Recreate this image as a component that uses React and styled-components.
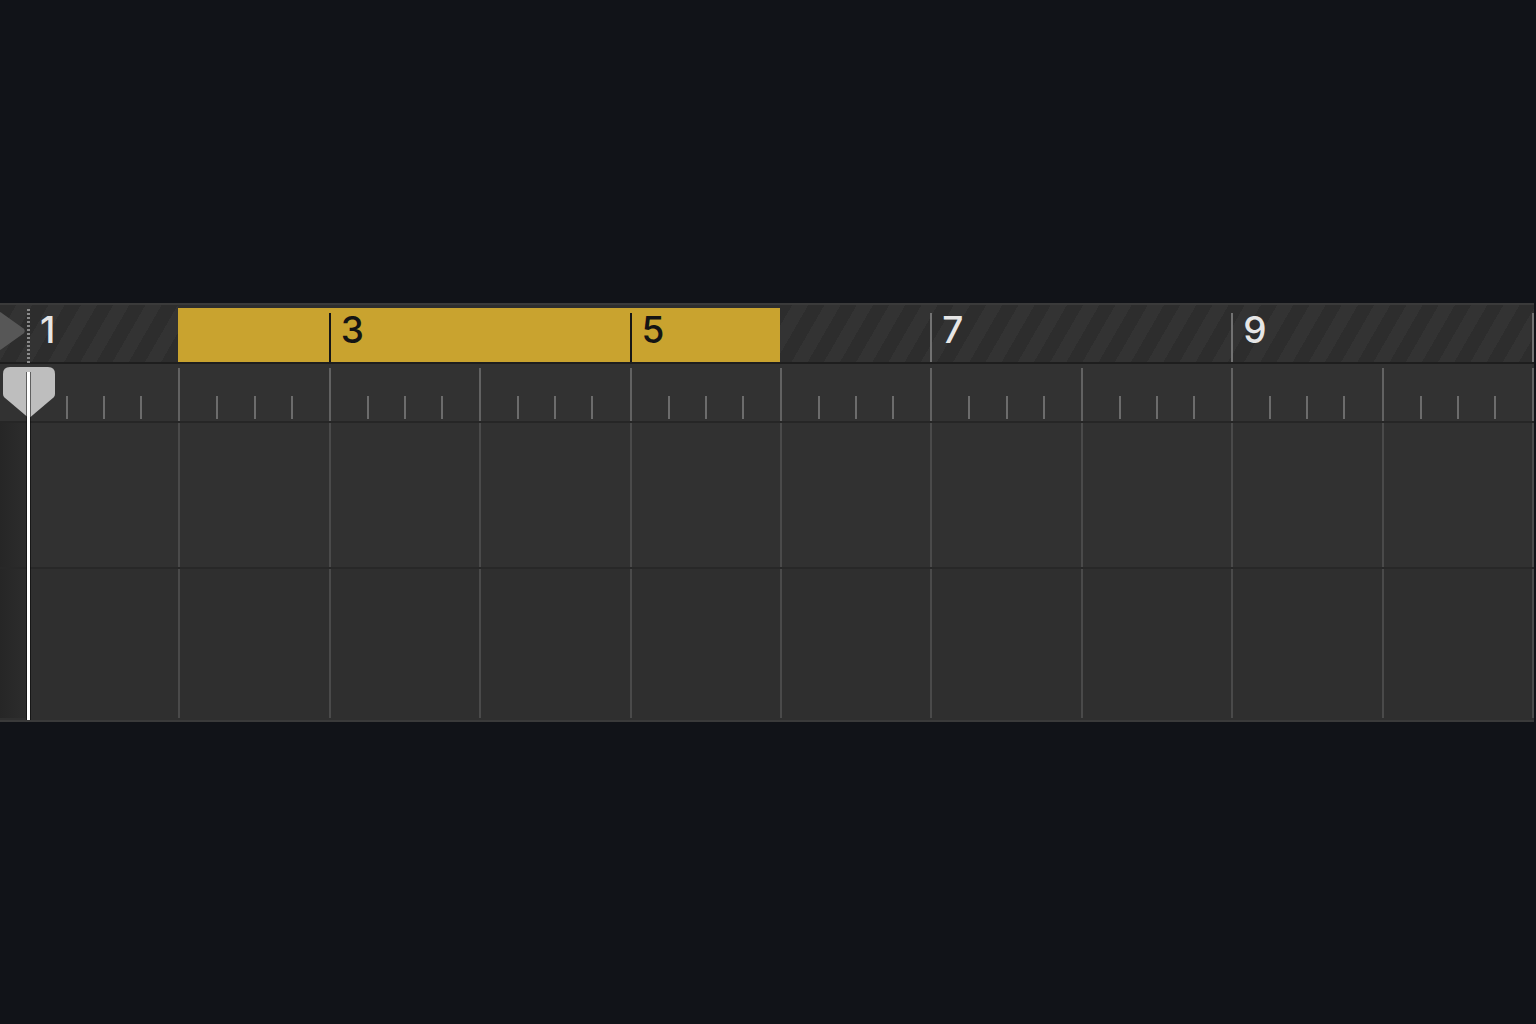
import React from "react";
import styled, { createGlobalStyle, css } from "styled-components";

const BAR_WIDTH = 150.4;
const LEAD = 28;
const BARS = Array.from({ length: 11 }, (_, i) => i + 1);
const CYCLE = { from: 2, to: 5 };
const LABELS = { 1: "1", 3: "3", 5: "5", 7: "7", 9: "9" };

const Global = createGlobalStyle`
  html, body { margin: 0; padding: 0; background: #111318; }
  body { font-family: Inter, "Liberation Sans", Arial, sans-serif; }
`;

const Page = styled.div`
  width: 1536px;
  height: 1024px;
  padding-top: 303px;
  box-sizing: border-box;
  background: #111318;
  overflow: hidden;
`;

const Panel = styled.div`
  position: relative;
  width: 1534px;
  border-top: 2px solid #3a3a3a;
  border-bottom: 2px solid #3a3a3a;
  overflow: hidden;
  background: #303030;
`;

const Row = styled.div`
  display: flex;
  height: ${(p) => p.$h}px;
  border-bottom: 2px solid ${(p) => p.$edge || "#242424"};
  background: ${(p) => p.$bg || "#303030"};
`;

const Lead = styled.div`
  position: relative;
  flex: 0 0 ${LEAD}px;
  ${(p) =>
    p.$shade &&
    css`
      background: linear-gradient(to right, #262626, #2d2d2d);
    `}
`;

/* ruler: bar numbers over a hatched strip, cycle range in yellow */
const Ruler = styled(Row)`
  background: repeating-linear-gradient(
    120deg,
    #2d2d2d 0 14px,
    #333333 14px 28px
  );
`;

const RulerCell = styled.div`
  position: relative;
  flex: 0 0 ${BAR_WIDTH}px;
  box-sizing: border-box;
  padding: 6px 0 0 12px;
  font-size: 37px;
  font-weight: 500;
  line-height: 1;
  color: ${(p) => (p.$cycle ? "#141414" : "#e6e6e6")};
  background: ${(p) =>
    p.$cycle ? "linear-gradient(#2e2e2e 0 3px, #c9a32f 3px)" : "transparent"};
  ${(p) =>
    p.$cycleEnd &&
    css`
      margin-right: -2px;
    `}

  ${(p) =>
    p.$mark &&
    css`
      &::before {
        content: "";
        position: absolute;
        left: 0;
        top: 8px;
        bottom: 0;
        width: 2px;
        background: ${p.$cycle ? "#161616" : "#727272"};
      }
    `}
  ${(p) =>
    p.$dotted &&
    css`
      &::before {
        content: "";
        position: absolute;
        left: -1px;
        top: 4px;
        bottom: -3px;
        width: 3px;
        background: repeating-linear-gradient(#8a8a8a 0 2px, transparent 2px 4px);
      }
    `}
`;

const StartMarker = styled.svg`
  position: absolute;
  left: 0;
  top: 6px;
  display: block;
`;

/* beat row: bar lines and quarter ticks */
const BeatCell = styled.div`
  position: relative;
  display: flex;
  flex: 0 0 ${BAR_WIDTH}px;
  border-left: 2px solid #626262;
  box-sizing: border-box;
  margin-top: 4px;
`;

const Beat = styled.div`
  position: relative;
  flex: 1;
  ${(p) =>
    p.$tick &&
    css`
      &::before {
        content: "";
        position: absolute;
        left: -1px;
        bottom: 2px;
        width: 2px;
        height: 23px;
        background: #6c6c6c;
      }
    `}
`;

/* track lanes */
const TrackCell = styled.div`
  flex: 0 0 ${BAR_WIDTH}px;
  box-sizing: border-box;
  border-left: 2px solid #4a4a4a;
`;

const Playhead = styled.div`
  position: absolute;
  left: 3px;
  top: 62px;
  bottom: 0;
  width: 52px;
  pointer-events: none;
`;

const PlayheadCap = styled.svg`
  position: absolute;
  left: 0;
  top: 0;
  display: block;
`;

const PlayheadLine = styled.div`
  position: absolute;
  left: 24px;
  top: 5px;
  bottom: 0;
  width: 3px;
  background: #ffffff;
  box-shadow: -1px 0 0 rgba(0, 0, 0, 0.5), 1px 0 0 rgba(0, 0, 0, 0.5);
`;

const inCycle = (n) => n >= CYCLE.from && n <= CYCLE.to;

export default function App() {
  return (
    <Page>
      <Global />
      <Panel>
        <Ruler $h={57} $edge="#1e1e1e">
          <Lead>
            <StartMarker width="26" height="40" viewBox="0 0 26 40">
              <path d="M-2 3 Q-2 0 1 1.5 L23.5 17.5 Q26 20 23.5 22.5 L1 38.5 Q-2 40 -2 37 Z" fill="#575757" />
            </StartMarker>
          </Lead>
          {BARS.map((n) => (
            <RulerCell
              key={n}
              $cycle={inCycle(n)}
              $mark={n % 2 === 1 && n !== 1}
              $dotted={n === 1}
            >
              {LABELS[n] || null}
            </RulerCell>
          ))}
        </Ruler>

        <Row $h={57} $bg="#323232" $edge="#262626">
          <Lead />
          {BARS.map((n) => (
            <BeatCell key={n}>
              <Beat />
              <Beat $tick />
              <Beat $tick />
              <Beat $tick />
            </BeatCell>
          ))}
        </Row>

        <Row $h={144} $bg="#313131" $edge="#282828">
          <Lead $shade />
          {BARS.map((n) => (
            <TrackCell key={n} />
          ))}
        </Row>
        <Row $h={149} $bg="#2f2f2f" $edge="transparent">
          <Lead $shade />
          {BARS.map((n) => (
            <TrackCell key={n} />
          ))}
        </Row>

        <Playhead>
          <PlayheadCap width="52" height="51" viewBox="0 0 52 51">
            <path
              d="M7 0 H45 Q52 0 52 7 V27 Q52 29 50.5 30.5 L27.5 50 Q26 51 24.5 50 L1.5 30.5 Q0 29 0 27 V7 Q0 0 7 0 Z"
              fill="#bebebe"
            />
          </PlayheadCap>
          <PlayheadLine />
        </Playhead>
      </Panel>
    </Page>
  );
}
